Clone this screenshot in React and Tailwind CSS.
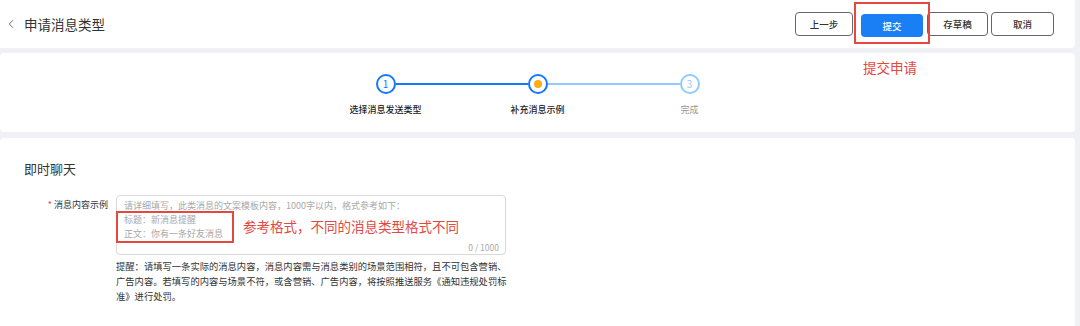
import React from 'react';
import { ChevronLeft } from 'lucide-react';

const font = { fontFamily: '"Noto Sans CJK SC", "Noto Sans", sans-serif' };

function Step({ num, label, left, right, state }) {
  const lineColor = (c) =>
    c === 'dark' ? 'bg-[#1677ff]' : c === 'light' ? 'bg-[#91caff]' : 'bg-transparent';
  return (
    <div className="flex flex-col items-center">
      <div className="flex w-full items-center">
        <div className={`h-[1.5px] flex-1 ${lineColor(left)}`} />
        {state === 'current' ? (
          <div className="flex h-[20px] w-[20px] items-center justify-center rounded-full border-2 border-[#1677ff] bg-white">
            <div className="h-[8px] w-[8px] rounded-full bg-[#faad14]" />
          </div>
        ) : state === 'done' ? (
          <div className="flex h-[20px] w-[20px] items-center justify-center rounded-full border-2 border-[#1677ff] bg-white text-[10px] leading-none text-[#1677ff]">
            {num}
          </div>
        ) : (
          <div className="flex h-[20px] w-[20px] items-center justify-center rounded-full border-2 border-[#91caff] bg-white text-[10px] leading-none text-[#91caff]">
            {num}
          </div>
        )}
        <div className={`h-[1.5px] flex-1 ${lineColor(right)}`} />
      </div>
      <div
        className={`mt-[9px] whitespace-nowrap text-[9px] leading-[14px] ${state === 'todo' ? 'text-[#9a9a9a]' : 'font-medium text-[#222]'}`}
      >
        {label}
      </div>
    </div>
  );
}

export default function App() {
  return (
    <div className="relative h-[326px] w-[1080px] overflow-hidden bg-[#f0f1f4]" style={font}>
      {/* header */}
      <div className="relative mr-[5px] flex h-[48px] items-center rounded-br-[4px] bg-white">
        <ChevronLeft className="ml-[4px] text-[#555]" size={14} strokeWidth={1.5} />
        <span className="ml-[6px] text-[13.5px] text-[#333]">申请消息类型</span>
        <div className="ml-auto mr-[21px] flex items-center">
          <button className="h-[24px] w-[58px] rounded-[4px] border border-[#666] bg-white text-[9.5px] font-medium text-[#333]">
            上一步
          </button>
          <div className="relative ml-[8px]">
            <button className="h-[23px] w-[62px] rounded-[4px] bg-[#1a7ef5] text-[9.5px] font-medium text-white">
              提交
            </button>
            <div className="absolute -left-[7px] -top-[9px] h-[42px] w-[76px] border-2 border-[#e5483f]" />
          </div>
          <button className="ml-[4px] h-[24px] w-[61px] rounded-[4px] border border-[#666] bg-white text-[9.5px] font-medium text-[#333]">
            存草稿
          </button>
          <button className="ml-[3px] h-[24px] w-[63px] rounded-[4px] border border-[#666] bg-white text-[9.5px] font-medium text-[#333]">
            取消
          </button>
        </div>
      </div>

      {/* steps */}
      <div className="relative mr-[5px] mt-[5px] h-[79px] rounded-[4px] bg-white pt-[21px]">
        <div className="mx-auto grid w-[456px] grid-cols-[152px_152px_152px]">
          <Step num="1" label="选择消息发送类型" left="none" right="dark" state="done" />
          <Step num="2" label="补充消息示例" left="dark" right="light" state="current" />
          <Step num="3" label="完成" left="light" right="none" state="todo" />
        </div>
        <span className="absolute left-[863px] top-[6px] text-[13.5px] leading-[16px] text-[#e5483f]">
          提交申请
        </span>
      </div>

      {/* content */}
      <div className="mr-[5px] mt-[6px] h-[200px] rounded-t-[4px] bg-white pl-[24px] pt-[22px]">
        <div className="text-[13px] leading-[18px] text-[#333]">即时聊天</div>
        <div className="mt-[17px] flex items-start">
          <div className="w-[84px] pt-[3px] text-right text-[9px] leading-[14px] text-[#333]">
            <span className="mr-[2px] text-[#e5483f]">*</span>
            消息内容示例
          </div>
          <div className="ml-[8px] w-[390px]">
            <div className="relative h-[60px] rounded-[4px] border border-[#d9d9d9] px-[7px] pt-[3px] text-[9px] leading-[14px] text-[#a8a8a8]">
              <div>请详细填写，此类消息的文案模板内容，1000字以内，格式参考如下：</div>
              <div>标题：新消息提醒</div>
              <div>正文：你有一条好友消息</div>
              <div className="absolute -left-px top-[15px] h-[32px] w-[118px] border-2 border-[#e5483f]" />
              <span className="absolute left-[126px] top-[22px] text-[13.5px] leading-[16px] text-[#e5483f]">
                参考格式，不同的消息类型格式不同
              </span>
              <span className="absolute bottom-[1px] right-[6px] text-[8.5px] leading-[12px] text-[#aaa]">
                0 / 1000
              </span>
            </div>
            <div className="mt-[4px] whitespace-nowrap text-[9.3px] leading-[15px] text-[#333]">
              <div>提醒：请填写一条实际的消息内容，消息内容需与消息类别的场景范围相符，且不可包含营销、</div>
              <div>广告内容。若填写的内容与场景不符，或含营销、广告内容，将按照推送服务《通知违规处罚标</div>
              <div>准》进行处罚。</div>
            </div>
          </div>
        </div>
      </div>
    </div>
  );
}
